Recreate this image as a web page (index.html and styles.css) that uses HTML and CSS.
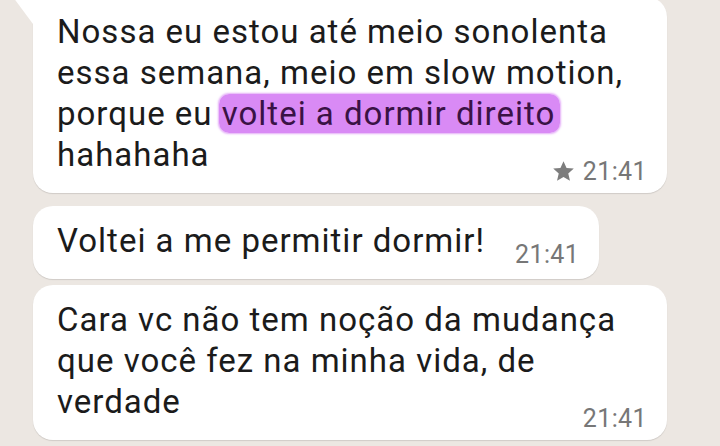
FILE: index.html
```html
<!DOCTYPE html>
<html lang="pt-BR">
<head>
<meta charset="utf-8">
<title>Conversa</title>
<link rel="stylesheet" href="styles.css">
</head>
<body>
<main class="chat">
  <div class="bubble bubble-first bubble-wide">
    <p class="msg">Nossa eu estou até meio sonolenta<br>essa semana, meio em slow motion,<br>porque eu <span class="mark">voltei a dormir direito</span><br>hahahaha</p>
    <div class="meta">
      <svg class="star" viewBox="1 1 22 21" aria-hidden="true"><path d="M12 1.2l3.2 7.1 7.6.7-5.8 5.1 1.8 7.6L12 17.7l-6.8 4 1.8-7.6-5.8-5.1 7.6-.7z"/></svg>
      <span class="time">21:41</span>
    </div>
  </div>
  <div class="bubble bubble-inline">
    <p class="msg">Voltei a me permitir dormir!</p>
    <span class="time">21:41</span>
  </div>
  <div class="bubble bubble-wide bubble-last">
    <p class="msg">Cara vc não tem noção da mudança<br>que você fez na minha vida, de<br>verdade</p>
    <div class="meta">
      <span class="time">21:41</span>
    </div>
  </div>
</main>
</body>
</html>
```

FILE: styles.css
```css
html, body {
  margin: 0;
  padding: 0;
  height: 100%;
  overflow: hidden;
}

body {
  background: #ece7e2;
  font-family: Roboto, "Noto Sans", "Liberation Sans", sans-serif;
  color: #1b1b1b;
}

.chat {
  display: flex;
  flex-direction: column;
  align-items: flex-start;
  padding-left: 33px;
}

.bubble {
  position: relative;
  background: #ffffff;
  border-radius: 20px;
  box-shadow: 0 1px 1px rgba(0, 0, 0, 0.12);
  padding: 14px 20px 6px 24px;
  box-sizing: border-box;
}

.bubble-wide {
  width: 634px;
}

.bubble-first {
  margin-top: -3px;
  border-top-left-radius: 0;
}

.bubble-first::before {
  content: "";
  position: absolute;
  left: -20px;
  top: 0;
  width: 20px;
  height: 27px;
  background: #ffffff;
  clip-path: polygon(0 0, 100% 0, 100% 100%);
}

.msg {
  margin: 0;
  font-size: 33px;
  line-height: 41px;
  letter-spacing: 1px;
  white-space: nowrap;
}

.mark {
  background: #d98af5;
  color: #3a1245;
  border-radius: 10px;
  box-shadow: 0 0 2px 1px rgba(217, 138, 245, 0.7);
  padding: 0 5px 0 3px;
  margin: 0 -5px 0 -3px;
}

.meta {
  display: flex;
  justify-content: flex-end;
  align-items: center;
  gap: 9px;
  margin-top: -18px;
}

.star {
  width: 21px;
  height: 20px;
  fill: #7d7d7d;
  margin-top: -2px;
}

.time {
  font-size: 25px;
  line-height: 30px;
  letter-spacing: 0.4px;
  color: #777777;
}

.bubble-inline {
  display: flex;
  align-items: flex-end;
  margin-top: 13px;
  padding-bottom: 9px;
}

.bubble-inline .msg {
  margin-bottom: 9px;
}

.bubble-inline .time {
  margin-left: 30px;
}

.bubble-last {
  margin-top: 6px;
}
```
